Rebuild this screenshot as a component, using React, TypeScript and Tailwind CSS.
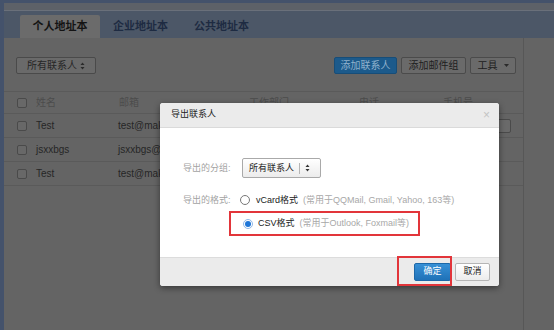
import React from 'react';

const font = { fontFamily: '"Liberation Sans", Arial, "Noto Sans CJK SC", sans-serif' };

function UpDown({ color }: { color: string }) {
  return (
    <svg width="5" height="8" viewBox="0 0 5 8" className="shrink-0">
      <path d="M2.5 0.5 L4.5 3 L0.5 3 Z" fill={color} />
      <path d="M2.5 7.5 L4.5 5 L0.5 5 Z" fill={color} />
    </svg>
  );
}

// only the part of each e-mail left of the dialog is visible
const rows = [
  { name: 'Test', email: 'test@mak' },
  { name: 'jsxxbgs', email: 'jsxxbgs@' },
  { name: 'Test', email: 'test@mak' },
];

function Checkbox() {
  return <div className="w-[10px] h-[10px] border border-[#4a4a4a] rounded-[2px] bg-[#686868]" />;
}

export default function App() {
  return (
    <div className="relative w-[554px] h-[330px] overflow-hidden bg-[#44526b] pt-[3px] pl-[4px] flex flex-col" style={font}>
      {/* page (dimmed by the modal backdrop) */}
      <div className="flex-1 flex flex-col bg-[#646464]">
        <div className="h-[7px] bg-[#5d6168]" />
        <div className="h-[28px] bg-[#4c5767] border-t border-[#6a707a] flex items-end pl-[16px]">
          <div className="w-[80px] h-[23px] bg-[#6b6b6b] rounded-t-[2px] flex items-center justify-center text-[11px] font-bold text-[#141414]">个人地址本</div>
          <div className="w-[81px] h-[23px] flex items-center justify-center text-[11px] font-bold text-[#1e2b42]">企业地址本</div>
          <div className="w-[81px] h-[23px] flex items-center justify-center text-[11px] font-bold text-[#1e2b42]">公共地址本</div>
        </div>
        <div className="flex-1 flex">
          <div className="w-[520px] flex flex-col border-r border-[#575757]">
            <div className="h-[54px] flex items-center pl-[12px] pr-[7px] pt-[2px] border-b border-[#5a5a5a]">
              <div className="w-[80px] h-[17px] border border-[#4a4a4a] rounded-[2px] bg-[#6a6a6a] flex items-center pl-[10px] pr-[10px] justify-between text-[10px] text-[#262626]">
                <span>所有联系人</span>
                <UpDown color="#2a2a2a" />
              </div>
              <div className="flex-1" />
              <div className="flex gap-[4px]">
                <div className="w-[63px] h-[17px] rounded-[2px] bg-[#1c5a8b] border border-[#174d78] flex items-center justify-center text-[10px] text-[#8fb1cd]">添加联系人</div>
                <div className="w-[65px] h-[17px] rounded-[2px] bg-[#6a6a6a] border border-[#4b4b4b] flex items-center justify-center text-[10px] text-[#202020]">添加邮件组</div>
                <div className="w-[46px] h-[17px] rounded-[2px] bg-[#6a6a6a] border border-[#4b4b4b] flex items-center justify-center gap-[6px] text-[10px] text-[#202020]">
                  <span>工具</span>
                  <svg width="5" height="3" viewBox="0 0 5 3"><path d="M0 0 H5 L2.5 3 Z" fill="#2a2a2a" /></svg>
                </div>
              </div>
            </div>
            <div className="h-[22px] flex items-center border-b border-[#5a5a5a] text-[10px] text-[#4c4c4c]">
              <div className="w-[32px] pl-[13px]"><Checkbox /></div>
              <div className="w-[83px]">姓名</div>
              <div className="w-[130px]">邮箱</div>
              <div className="w-[110px]">工作部门</div>
              <div className="w-[84px]">电话</div>
              <div>手机号</div>
            </div>
            {rows.map((r, i) => (
              <div key={i} className="h-[24px] flex items-center border-b border-[#5a5a5a] text-[10px] text-[#262626]">
                <div className="w-[32px] pl-[13px]"><Checkbox /></div>
                <div className="w-[82px]">{r.name}</div>
                <div className="whitespace-nowrap">{r.email}</div>
                <div className="flex-1" />
                {i === 0 && (
                  <div className="mr-[12px] w-[28px] h-[14px] border border-[#4a4a4a] rounded-[2px] bg-[#6a6a6a]" />
                )}
              </div>
            ))}
          </div>
          <div className="flex-1" />
        </div>
      </div>

      {/* export dialog */}
      <div className="absolute left-[160px] top-[103px] w-[339px] rounded-[3px] overflow-hidden shadow-[0_2px_6px_rgba(0,0,0,0.45)] bg-white flex flex-col">
        <div className="h-[25px] bg-[#ebebeb] border-b border-[#dadada] flex items-center justify-between pl-[11px] pr-[9px]">
          <span className="text-[9px] text-[#222]">导出联系人</span>
          <span className="text-[12px] leading-none text-[#c4c4c4]">×</span>
        </div>
        <div className="h-[129px] flex flex-col pt-[30px] text-[9px] leading-none">
          <div className="flex items-center h-[20px]">
            <div className="w-[74px] pl-[23px] whitespace-nowrap text-[#a3a3a3]">导出的分组:</div>
            <div className="ml-[8px] w-[79px] h-[20px] border border-[#a9a9a9] rounded-[2px] bg-gradient-to-b from-white to-[#ececec] flex items-center pl-[6px] text-[#222]">
              <span className="w-[50px] whitespace-nowrap">所有联系人</span>
              <span className="w-px h-[11px] bg-[#b5b5b5] mr-[5px]" />
              <UpDown color="#333" />
            </div>
          </div>
          <div className="flex items-center h-[20px] mt-[12px]">
            <div className="w-[74px] pl-[23px] whitespace-nowrap text-[#a3a3a3]">导出的格式:</div>
            <div className="ml-[6px] w-[10px] h-[10px] rounded-full border border-[#777] bg-white" />
            <span className="ml-[6px] text-[#222]">vCard格式</span>
            <span className="ml-[5px] text-[#a8a8a8]">(常用于QQMail, Gmail, Yahoo, 163等)</span>
          </div>
          <div className="ml-[69px] mt-[1px] w-[191px] h-[25px] border-2 border-[#e2353a] flex items-center pl-[12px]">
            <div className="w-[10px] h-[10px] rounded-full border border-[#8fb8e8] bg-white flex items-center justify-center">
              <div className="w-[6px] h-[6px] rounded-full bg-[#1e76d8]" />
            </div>
            <span className="ml-[5px] text-[#222]">CSV格式</span>
            <span className="ml-[5px] text-[#a8a8a8]">(常用于Outlook, Foxmail等)</span>
          </div>
        </div>
        <div className="relative h-[29px] bg-[#ebebeb] border-t border-[#dcdcdc] flex items-center justify-end pr-[9px] gap-[4px]">
          <div className="w-[37px] h-[18px] rounded-[2px] bg-gradient-to-b from-[#3790d6] to-[#1f72b8] border border-[#1d68a8] flex items-center justify-center text-[9px] text-white">确定</div>
          <div className="w-[35px] h-[18px] rounded-[2px] bg-gradient-to-b from-white to-[#ececec] border border-[#b5b5b5] flex items-center justify-center text-[9px] text-[#222]">取消</div>
          <div className="absolute left-[237px] top-[-2px] w-[55px] h-[30px] border-2 border-[#e2353a]" />
        </div>
      </div>
    </div>
  );
}
